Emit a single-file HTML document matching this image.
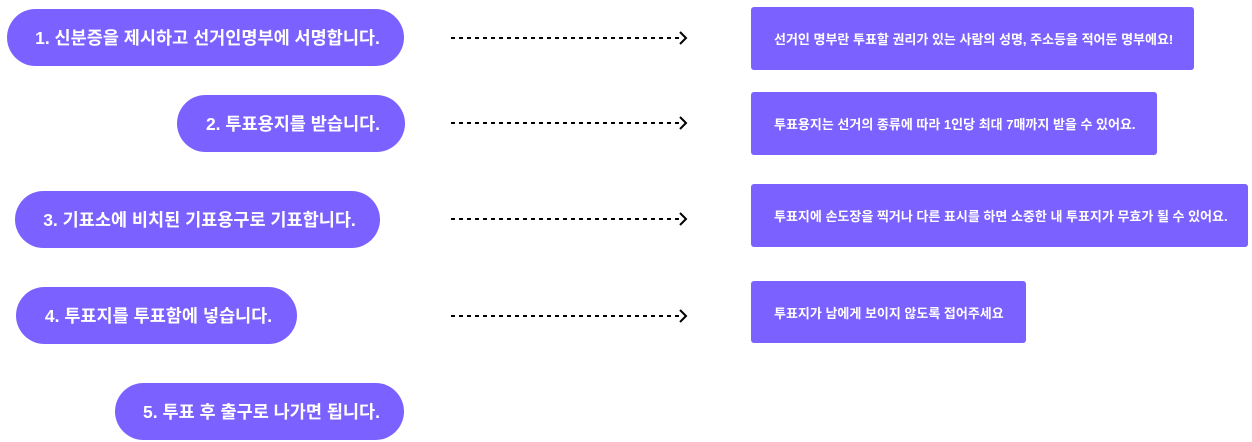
<!DOCTYPE html>
<html><head><meta charset="utf-8"><style>
body{margin:0;width:1252px;height:442px;background:#fff;position:relative;overflow:hidden;font-family:"Liberation Sans","Noto Sans CJK KR",sans-serif}
.p{position:absolute;height:57px;border-radius:29px;background:#7B61FF;color:#fff;font-size:17.5px;font-weight:bold;display:flex;align-items:center;justify-content:center;white-space:nowrap;padding-left:4px;box-sizing:border-box}
.b{position:absolute;height:63px;border-radius:3px;background:#7B61FF;color:#fff;font-size:13px;font-weight:bold;display:flex;align-items:center;padding-left:23px;box-sizing:border-box;white-space:nowrap}
svg{position:absolute;left:448px}
</style></head><body>
<div class="p" style="left:7px;top:9px;width:397px">1. 신분증을 제시하고 선거인명부에 서명합니다.</div>
<div class="p" style="left:177px;top:95px;width:228px">2. 투표용지를 받습니다.</div>
<div class="p" style="left:15px;top:191px;width:365px">3. 기표소에 비치된 기표용구로 기표합니다.</div>
<div class="p" style="left:16px;top:287px;width:281px">4. 투표지를 투표함에 넣습니다.</div>
<div class="p" style="left:115px;top:383px;width:289px">5. 투표 후 출구로 나가면 됩니다.</div>

<svg style="top:30px" width="245" height="18"><line x1="3" y1="8" x2="235" y2="8" stroke="#000" stroke-width="2" stroke-dasharray="4 4"/><path d="M232 2l6 6-6 6" fill="none" stroke="#000" stroke-width="2"/></svg>
<svg style="top:115px" width="245" height="18"><line x1="3" y1="8" x2="235" y2="8" stroke="#000" stroke-width="2" stroke-dasharray="4 4"/><path d="M232 2l6 6-6 6" fill="none" stroke="#000" stroke-width="2"/></svg>
<svg style="top:211px" width="245" height="18"><line x1="3" y1="8" x2="235" y2="8" stroke="#000" stroke-width="2" stroke-dasharray="4 4"/><path d="M232 2l6 6-6 6" fill="none" stroke="#000" stroke-width="2"/></svg>
<svg style="top:308px" width="245" height="18"><line x1="3" y1="8" x2="235" y2="8" stroke="#000" stroke-width="2" stroke-dasharray="4 4"/><path d="M232 2l6 6-6 6" fill="none" stroke="#000" stroke-width="2"/></svg>

<div class="b" style="left:751px;top:7px;width:443px">선거인 명부란 투표할 권리가 있는 사람의 성명, 주소등을 적어둔 명부에요!</div>
<div class="b" style="left:751px;top:92px;width:406px">투표용지는 선거의 종류에 따라 1인당 최대 7매까지 받을 수 있어요.</div>
<div class="b" style="left:751px;top:184px;width:497px">투표지에 손도장을 찍거나 다른 표시를 하면 소중한 내 투표지가 무효가 될 수 있어요.</div>
<div class="b" style="left:751px;top:281px;width:275px;height:62px">투표지가 남에게 보이지 않도록 접어주세요</div>
</body></html>
